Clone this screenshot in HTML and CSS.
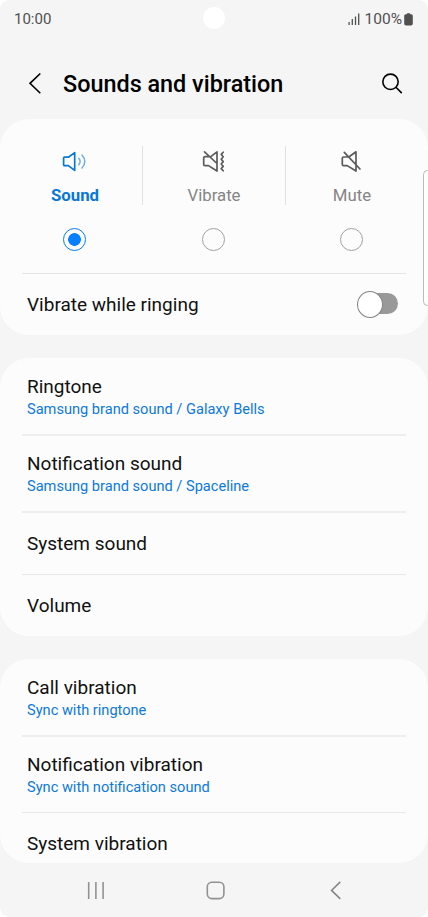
FILE: index.html
```html
<!DOCTYPE html>
<html lang="en">
<head>
<meta charset="utf-8">
<title>Sounds and vibration</title>
<link rel="stylesheet" href="styles.css">
</head>
<body>
<div class="screen">
  <div class="status">
    <span class="clock">10:00</span>
    <div class="indicators">
      <svg width="12" height="14" viewBox="0 0 12 14" fill="none" stroke="#505050" stroke-width="1.3"><path d="M1.100 10v3M4.300 7v6M7.500 4.500v8.500M10.700 1.500V13"/></svg>
      <span class="percent">100%</span>
      <svg width="9" height="13" viewBox="0 0 9 13" fill="#505050"><path d="M2.700 1.200q0-1 1-1h1.600q1 0 1 1h.9q1.600 0 1.600 1.500v8q0 1.800-1.800 1.800H2Q.2 12.500.2 10.700V2.700Q.2 1.200 1.800 1.200z"/></svg>
    </div>
    <span class="camera"></span>
  </div>
  <header class="header">
    <svg class="back" width="14" height="24" viewBox="0 0 14 24" fill="none" stroke="#000" stroke-width="1.600"><path d="M12.300 1.500L2 11.300l10.300 10"/></svg>
    <h1>Sounds and vibration</h1>
    <svg class="search" width="22" height="22" viewBox="0 0 22 22" fill="none" stroke="#000" stroke-width="1.600" stroke-linecap="round"><circle cx="9.500" cy="8.800" r="7.700"/><path d="M15.200 14.500l5.100 5.100"/></svg>
  </header>
  <main>
    <section class="card">
      <div class="modes">
        <div class="mode selected">
          <svg width="26" height="24" viewBox="0 0 26 24" fill="none" stroke="#0877da" stroke-width="1.700" stroke-linejoin="round"><path d="M1.600 9.200q0-1 1-1h3.700L12.700 3.600v17.800L6.300 16.600H2.600q-1 0-1-1z"/><g stroke="#71aee7" stroke-width="1.500" stroke-linecap="round"><path d="M16.800 9.300q2.600 3.200 0 6.400M20 6q5.600 6.500 0 13"/></g></svg>
          <span>Sound</span><i class="radio"></i>
        </div>
        <div class="mode">
          <svg width="26" height="24" viewBox="0 0 26 24" fill="none" stroke="#5b5b5b" stroke-width="1.700" stroke-linejoin="round" stroke-linecap="round"><path d="M7.300 7.700H3.900q-1.200 0-1.200 1.200v6.500q0 1.200 1.200 1.200h3.600L16 22V2.900L9.800 7.700M3.500 2.800L16 14.500"/><path d="M22.200 3.200l-2 2.200 2 2.400-2 2.400 2 2.400-2 2.400 2 2.400-2 2.200 2 2.200"/></svg>
          <span>Vibrate</span><i class="radio"></i>
        </div>
        <div class="mode">
          <svg width="26" height="24" viewBox="0 0 26 24" fill="none" stroke="#5b5b5b" stroke-width="1.700" stroke-linejoin="round" stroke-linecap="round"><path d="M8.400 8H4.500Q3.300 8 3.300 9.200v6.200q0 1.200 1.200 1.200H8.200l8.800 5.400V2.800L10.800 7.300M5.300 3.300L21 20"/></svg>
          <span>Mute</span><i class="radio"></i>
        </div>
      </div>
      <div class="row toggle-row"><span class="name">Vibrate while ringing</span><span class="toggle"></span></div>
    </section>
    <section class="card">
      <div class="row double"><span class="name">Ringtone</span><span class="detail">Samsung brand sound / Galaxy Bells</span></div>
      <div class="row double"><span class="name">Notification sound</span><span class="detail">Samsung brand sound / Spaceline</span></div>
      <div class="row"><span class="name">System sound</span></div>
      <div class="row"><span class="name">Volume</span></div>
    </section>
    <section class="card">
      <div class="row double"><span class="name">Call vibration</span><span class="detail">Sync with ringtone</span></div>
      <div class="row double short"><span class="name">Notification vibration</span><span class="detail">Sync with notification sound</span></div>
      <div class="row clipped"><span class="name">System vibration</span></div>
    </section>
  </main>
  <nav>
    <svg width="20" height="20" viewBox="0 0 20 20" fill="none" stroke="#929292" stroke-width="1.600"><path d="M2.700 2v17M9.900 2v17M17.100 2v17"/></svg>
    <svg width="20" height="20" viewBox="0 0 20 20" fill="none" stroke="#929292" stroke-width="1.600"><rect x="1.300" y="2.200" width="16.600" height="16.400" rx="4.500"/></svg>
    <svg width="20" height="20" viewBox="0 0 20 20" fill="none" stroke="#858585" stroke-width="1.500"><path d="M14.300 1.900L5.500 10.400l8.800 8.500"/></svg>
  </nav>
  <span class="edge-handle"></span>
</div>
</body>
</html>
```
FILE: styles.css
```css
* { box-sizing: border-box; }
body { margin: 0; background: #fff; font-family: Roboto, sans-serif; }
.screen { position: relative; width: 428px; height: 917px; overflow: hidden; background: #f5f5f5; border-radius: 9px; }
svg { display: block; flex: none; }
.status { position: relative; height: 38px; padding: 0 15px 0 14px; display: flex; align-items: center; justify-content: space-between; color: #505050; font-size: 15px; }
.indicators { display: flex; align-items: center; }
.percent { margin: 0 2px 0 5px; font-size: 15.500px; }
.camera { position: absolute; left: 203px; top: 7px; width: 22px; height: 22px; border-radius: 50%; background: #fff; }
.header { height: 81px; padding: 10px 25px 0 28px; display: flex; align-items: center; }
h1 { margin: 1px 0 0 21px; font-size: 23.400px; line-height: 30px; font-weight: 500; color: #000; white-space: nowrap; }
.search { margin-left: auto; }
main { display: flex; flex-direction: column; gap: 23px; }
.card { padding: 0 22px; border-radius: 29px; background: #fcfcfc; }
.modes { height: 155px; padding-top: 27px; border-bottom: 1px solid #e5e5e5; display: grid; grid-template-columns: 121px 143px 120px; }
.mode { height: 59px; display: flex; flex-direction: column; align-items: center; color: #858585; font-size: 16.800px; line-height: 22px; border-right: 1px solid #e1e1e1; }
.mode:first-child { padding-right: 14px; }
.mode:last-child { border: 0; padding-left: 12px; }
.mode svg { margin: 3px 0 11px; }
.selected { color: #0877da; font-weight: 700; }
.radio { flex: none; width: 23px; height: 23px; margin: 22px 0 0 -1px; border: 1.500px solid #a1a1a1; border-radius: 50%; }
.selected .radio { border-color: #087cea; background: radial-gradient(circle, #0780ff 0 6px, transparent 6.700px); }
.row { height: 62px; padding: 0 5px; display: flex; flex-direction: column; justify-content: center; border-bottom: 1px solid #e8e8e8; }
.row:last-child { height: 61px; border: 0; }
.double { height: 77px; padding-top: 2px; border-bottom: 2px solid #eee; }
.double:first-child { height: 78px; padding-top: 3px; }
.short { height: 76px; border-bottom: 1px solid #e8e8e8; }
.name { color: #111; font-size: 19px; line-height: 24px; }
.detail { margin: -1px 0 1px; color: #0d79dc; font-size: 14.600px; line-height: 22px; }
.row.toggle-row { flex-direction: row; align-items: center; justify-content: space-between; }
.toggle { position: relative; width: 39px; height: 21px; margin: 0 3px 2px 0; border-radius: 11px; background: #999; }
.toggle::before { content: ""; position: absolute; left: -2px; top: -2px; width: 24px; height: 25px; border: 1px solid #858585; border-radius: 50%; background: #fff; }
.row.clipped { height: 50px; padding-top: 12px; }
nav { height: 54px; padding: 0 82px 0 86px; display: flex; align-items: center; justify-content: space-between; }
.edge-handle { position: absolute; right: -4px; top: 170px; width: 9px; height: 136px; border: 1px solid #bbb; border-radius: 5px; background: #fff; }
```
